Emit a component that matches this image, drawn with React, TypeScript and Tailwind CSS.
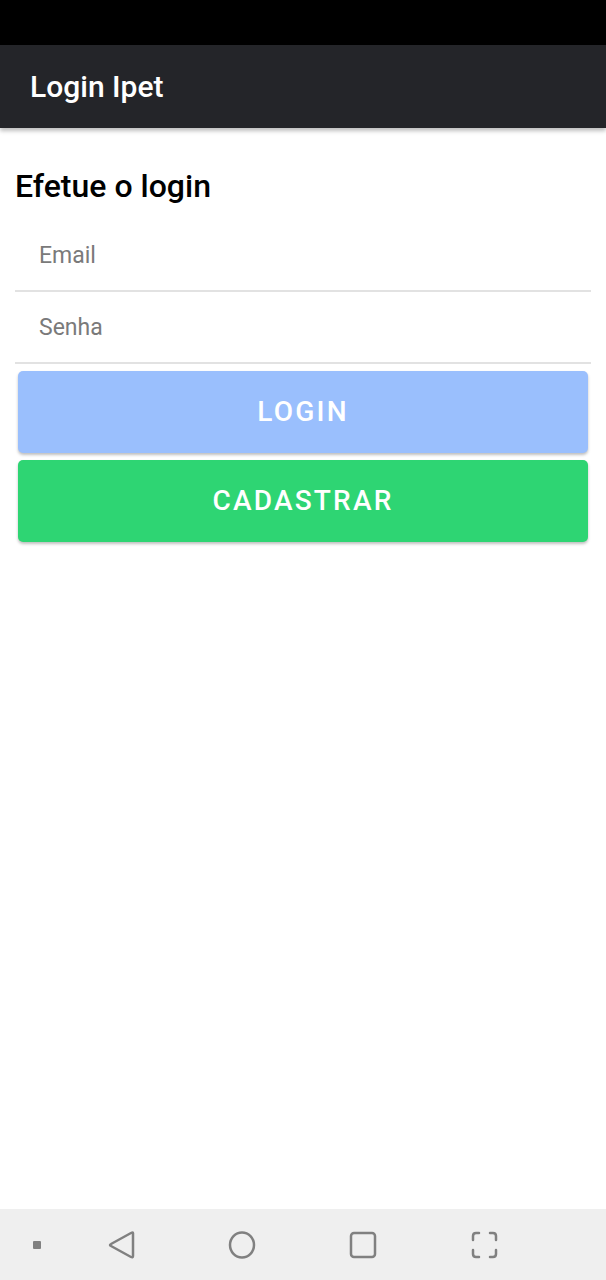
import React from "react";

export default function App() {
  return (
    <div className="w-[606px] h-[1280px] flex flex-col bg-white font-['Roboto',sans-serif] overflow-hidden">
      <div className="h-[45px] bg-black shrink-0" />
      <div className="h-[83px] bg-[#242529] shrink-0 flex items-center pl-[30px] shadow-[0_3px_4px_rgba(0,0,0,0.25)] relative z-10">
        <span className="text-white text-[30px] font-medium leading-none">Login Ipet</span>
      </div>
      <div className="flex-1 flex flex-col px-[15px]">
        <h1 className="mt-[42px] text-[32px] font-medium leading-none text-black">Efetue o login</h1>
        <div className="mt-[18px] h-[72px] flex items-center pl-[24px] border-b-2 border-[#e2e2e2]">
          <span className="text-[23px] text-[#7a7a7a] leading-none">Email</span>
        </div>
        <div className="h-[72px] flex items-center pl-[24px] border-b-2 border-[#e2e2e2]">
          <span className="text-[23px] text-[#7a7a7a] leading-none">Senha</span>
        </div>
        <div className="px-[3px] flex flex-col gap-[7px] mt-[7px]">
          <button className="h-[82px] rounded-[5px] bg-[#9abffd] text-white text-[28px] font-medium tracking-[2.2px] shadow-[0_2px_3px_rgba(0,0,0,0.25)]">
            LOGIN
          </button>
          <button className="h-[82px] rounded-[5px] bg-[#2ed573] text-white text-[28px] font-medium tracking-[2.2px] shadow-[0_2px_3px_rgba(0,0,0,0.25)]">
            CADASTRAR
          </button>
        </div>
      </div>
      <div className="h-[71px] bg-[#efefef] shrink-0 flex items-center relative">
        <svg width="606" height="71" viewBox="0 0 606 71" fill="none" stroke="#808080" strokeWidth="2.5" strokeLinecap="round" strokeLinejoin="round">
          <rect x="33" y="32" width="8" height="8" rx="1" fill="#808080" stroke="none" />
          <path d="M133 24 L133 47 Q133 49 131 48 L111 37 Q109 36 111 35 L131 24 Q133 23 133 24 Z" />
          <ellipse cx="242" cy="36" rx="12" ry="12.5" />
          <rect x="351" y="24" width="24" height="24" rx="3" />
          <path d="M473 31 V27 Q473 24 476 24 H479" />
          <path d="M490 24 H493 Q496 24 496 27 V31" />
          <path d="M473 41 V45 Q473 48 476 48 H479" />
          <path d="M490 48 H493 Q496 48 496 45 V41" />
        </svg>
      </div>
    </div>
  );
}
